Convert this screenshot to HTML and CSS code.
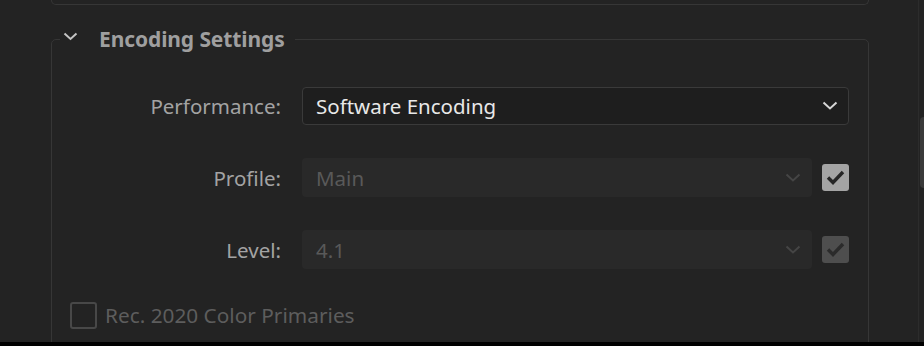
FILE: index.html
```html
<!DOCTYPE html>
<html lang="en">
<head>
    <meta charset="UTF-8">
    <meta name="viewport" content="width=device-width, initial-scale=1.0">
    <title>Encoding Settings</title>
    <link rel="stylesheet" href="styles.css">
</head>
<body>
<div class="app">
    <div class="content">
        <div class="prev-box"></div>

        <fieldset class="section">
            <legend class="section-title">
                <svg class="twisty" width="15" height="9" viewBox="0 0 15 9">
                    <path d="M1.5 1.5 L7.5 7 L13.5 1.5" fill="none" stroke="#c4c4c4" stroke-width="2"/>
                </svg>
                <span>Encoding Settings</span>
            </legend>

            <div class="row">
                <label class="row-label">Performance:</label>
                <div class="select select-wide">
                    <span>Software Encoding</span>
                    <svg width="16" height="10" viewBox="0 0 16 10">
                        <path d="M1.5 1.5 L8 7.5 L14.5 1.5" fill="none" stroke="#d6d6d6" stroke-width="2"/>
                    </svg>
                </div>
            </div>

            <div class="row">
                <label class="row-label">Profile:</label>
                <div class="select disabled">
                    <span>Main</span>
                    <svg width="16" height="10" viewBox="0 0 16 10">
                        <path d="M1.5 1.5 L8 7.5 L14.5 1.5" fill="none" stroke="#454545" stroke-width="2"/>
                    </svg>
                </div>
                <div class="check checked">
                    <svg width="19" height="15" viewBox="0 0 19 15">
                        <path d="M2 7.5 L7 12.5 L17 2" fill="none" stroke="#262626" stroke-width="3.4"/>
                    </svg>
                </div>
            </div>

            <div class="row">
                <label class="row-label">Level:</label>
                <div class="select disabled">
                    <span>4.1</span>
                    <svg width="16" height="10" viewBox="0 0 16 10">
                        <path d="M1.5 1.5 L8 7.5 L14.5 1.5" fill="none" stroke="#454545" stroke-width="2"/>
                    </svg>
                </div>
                <div class="check checked dim">
                    <svg width="19" height="15" viewBox="0 0 19 15">
                        <path d="M2 7.5 L7 12.5 L17 2" fill="none" stroke="#2b2b2b" stroke-width="3.4"/>
                    </svg>
                </div>
            </div>

            <div class="option">
                <div class="check empty"></div>
                <span>Rec. 2020 Color Primaries</span>
            </div>
        </fieldset>
    </div>

    <div class="scroll-track">
        <div class="scroll-thumb"></div>
    </div>
</div>
</body>
</html>
```

FILE: styles.css
```css
body {
    margin: 0;
    background-color: #000;
    font-family: "Noto Sans", "Open Sans", sans-serif;
    overflow: hidden;
}

.app {
    display: flex;
    height: 342px;
    background-color: #232323;
    overflow: hidden;
}

.content {
    width: 818px;
    margin-left: 51px;
}

.prev-box {
    height: 4px;
    border: 1px solid #363636;
    border-top: none;
    border-radius: 0 0 5px 5px;
}

.section {
    margin: 22px 0 0 0;
    padding: 0;
    height: 330px;
    border: 1px solid #363636;
    border-radius: 5px;
    min-width: 0;
}

.section-title {
    display: flex;
    align-items: center;
    height: 24px;
    margin-left: 8px;
    padding: 0 10px 0 3px;
    color: #9f9f9f;
    font-size: 21px;
    font-weight: bold;
    letter-spacing: -0.1px;
}

.twisty {
    margin-right: 21px;
    margin-top: -6px;
}

.row {
    display: flex;
    align-items: center;
    height: 39px;
    margin-top: 33px;
}

.row:first-of-type {
    margin-top: 35px;
}

.row-label {
    width: 229px;
    margin-right: 21px;
    text-align: right;
    color: #a3a3a3;
    font-size: 20.5px;
}

.select {
    display: flex;
    align-items: center;
    justify-content: space-between;
    box-sizing: border-box;
    width: 510px;
    height: 39px;
    padding: 0 10px 0 14px;
    border-radius: 4px;
    font-size: 20.5px;
}

.select-wide {
    width: 547px;
    height: 38px;
    background-color: #1e1e1e;
    border: 1px solid #3a3a3a;
    color: #e8e8e8;
    padding-left: 13px;
}

.select.disabled {
    background-color: #292929;
    color: #595959;
    padding-right: 11px;
}

.check {
    box-sizing: border-box;
    display: flex;
    align-items: center;
    justify-content: center;
    width: 27px;
    height: 27px;
    border-radius: 3px;
}

.row .check {
    margin-left: 10px;
}

.check.checked {
    background-color: #a4a4a4;
}

.check.dim {
    background-color: #4e4e4e;
}

.check.empty {
    border: 2px solid #484848;
}

.option {
    display: flex;
    align-items: center;
    margin: 32px 0 0 18px;
    color: #5d5d5d;
    font-size: 20.8px;
}

.option .check {
    margin-right: 8px;
}

.scroll-track {
    position: relative;
    margin-left: 49px;
    flex: 1;
    border-left: 1px solid #2c2c2c;
}

.scroll-thumb {
    position: absolute;
    top: 117px;
    right: 0;
    width: 4px;
    height: 71px;
    background-color: #3a3a3a;
    border-radius: 4px 0 0 4px;
}
```
